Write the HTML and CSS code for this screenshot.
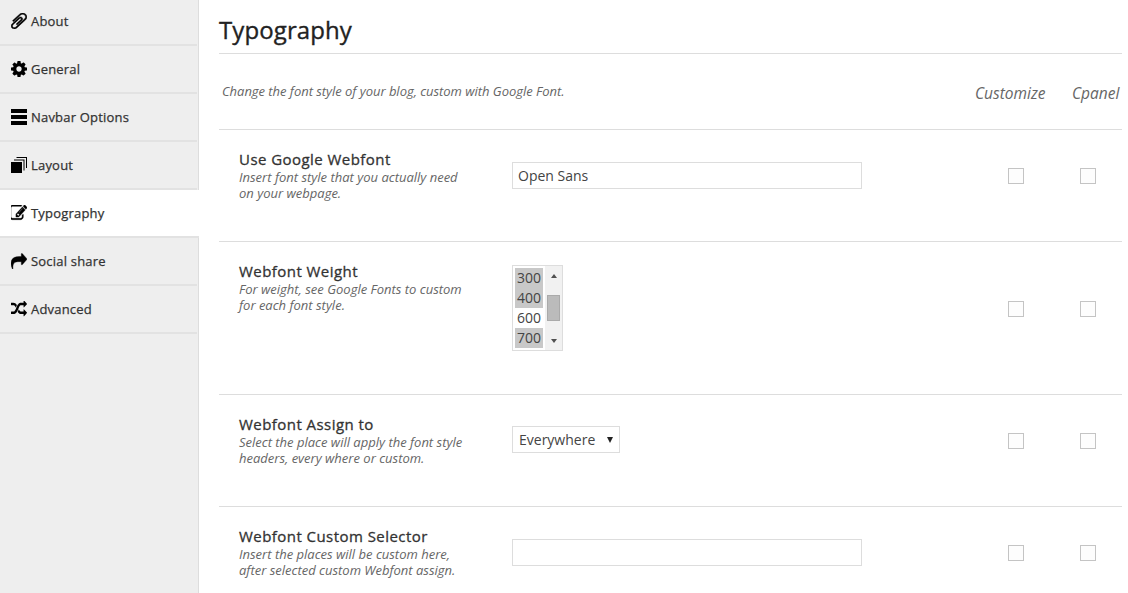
FILE: index.html
```html
<!DOCTYPE html>
<html lang="en">
<head>
<meta charset="utf-8">
<title>Typography</title>
<link rel="stylesheet" href="styles.css">
</head>
<body>
<div class="page">
<nav class="side">
  <a class="tab"><svg class="ico bold" viewBox="190 130 1410 1535" preserveAspectRatio="none"><path transform="matrix(-1 0 0 1 1792 0)" d="M1596 1385q0 117-79 196t-196 79q-135 0-235-100l-777-776q-113-115-113-271 0-159 110-270t269-111q158 0 273 113l605 606q10 10 10 22 0 16-30.500 46.500t-46.500 30.500q-13 0-23-10l-606-607q-79-77-181-77-106 0-179 75t-73 181q0 105 76 181l776 777q63 63 145 63 64 0 106-42t42-106q0-82-63-145l-581-581q-26-24-60-24-29 0-48 19t-19 48q0 32 25 59l410 410q10 10 10 22 0 16-31 47t-47 31q-12 0-22-10l-410-410q-63-61-63-149 0-82 57-139t139-57q88 0 149 63l581 581q100 98 100 235z"/></svg>About</a>
  <a class="tab"><svg class="ico" viewBox="128 128 1536 1536" preserveAspectRatio="none"><path d="M1152 896q0-106-75-181t-181-75-181 75-75 181 75 181 181 75 181-75 75-181zm512-109v222q0 12-8 23t-20 13l-185 28q-19 54-39 91 35 50 107 138 10 12 10 25t-9 23q-27 37-99 108t-94 71q-12 0-26-9l-138-108q-44 23-91 38-16 136-29 186-7 28-36 28h-222q-14 0-24.500-8.500t-11.500-21.500l-28-184q-49-16-90-37l-141 107q-10 9-25 9-14 0-25-11-126-114-165-168-7-10-7-23 0-12 8-23 15-21 51-66.500t54-70.500q-27-50-41-99l-183-27q-13-2-21-12.500t-8-23.500v-222q0-12 8-23t19-13l186-28q14-46 39-92-40-57-107-138-10-12-10-24 0-10 9-23 26-36 98.500-107.500t94.500-71.500q13 0 26 10l138 107q44-23 91-38 16-136 29-186 7-28 36-28h222q14 0 24.500 8.500t11.500 21.500l28 184q49 16 90 37l142-107q9-9 24-9 13 0 25 10 129 119 165 170 7 8 7 22 0 12-8 23-15 21-51 66.500t-54 70.500q26 50 41 98l183 28q13 2 21 12.500t8 23.500z"/></svg>General</a>
  <a class="tab"><svg class="ico" viewBox="0 0 16 16"><path d="M0 0h16v4H0zM0 6h16v4H0zM0 12h16v4H0z"/></svg>Navbar Options</a>
  <a class="tab"><svg class="ico" viewBox="0 0 16 16"><path d="M5.500 0H16V11H15V1H5.500zM3 2.500H13.500V13.500H12.500V3.500H3zM0 5H11V16H0z"/></svg>Layout</a>
  <a class="tab active"><svg class="ico bold" viewBox="128 130 1660 1534" preserveAspectRatio="none"><path d="M888 1184l116-116-152-152-116 116v56h96v96h56zm440-720q-16-16-33 1l-350 350q-17 17-1 33t33-1l350-350q17-17 1-33zm80 594v190q0 119-84.500 203.500t-203.500 84.500h-832q-119 0-203.500-84.500t-84.500-203.500v-832q0-119 84.500-203.500t203.500-84.500h832q63 0 117 25 15 7 18 23 3 17-9 29l-49 49q-14 14-32 8-23-6-45-6h-832q-66 0-113 47t-47 113v832q0 66 47 113t113 47h832q66 0 113-47t47-113v-126q0-13 9-22l64-64q15-15 35-7t20 29zm-96-738l288 288-672 672h-288v-288zm444 132l-92 92-288-288 92-92q28-28 68-28t68 28l152 152q28 28 28 68t-28 68z"/></svg>Typography</a>
  <a class="tab"><svg class="ico bold" viewBox="0 25 1792 1609" preserveAspectRatio="none"><path d="M1792 640q0 26-19 45l-512 512q-19 19-45 19t-45-19-19-45v-256h-224q-98 0-175.500 6t-154 21.500-133 42.500-105.500 69.500-80 101-48.500 138.500-17.500 181q0 55 5 123 0 6 2.500 23.500t2.500 26.500q0 15-8.500 25t-23.500 10q-16 0-28-17-7-9-13-22t-13.500-30-10.500-24q-127-285-127-451 0-199 53-333 162-403 875-403h224v-256q0-26 19-45t45-19 45 19l512 512q19 19 19 45z"/></svg>Social share</a>
  <a class="tab"><svg class="ico" viewBox="0 90 1792 1609" preserveAspectRatio="none"><path d="M666 481q-60 92-137 273-22-45-37-72.500t-40.500-63.500-51-56.500-63-35-81.500-14.500h-224q-14 0-23-9t-9-23v-192q0-14 9-23t23-9h224q250 0 410 225zm1126 799q0 14-9 23l-320 320q-9 9-23 9-13 0-22.500-9.500t-9.500-22.500v-192q-32 0-85 .5t-81 1-73-1-71-5-64-10.500-63-18.500-58-28.500-59-40-55-53.500-56-69q59-93 136-273 22 45 37 72.500t40.500 63.500 51 56.500 63 35 81.500 14.500h256v-192q0-14 9-23t23-9q12 0 24 10l319 319q9 9 9 23zm0-896q0 14-9 23l-320 320q-9 9-23 9-13 0-22.500-9.500t-9.500-22.500v-192h-256q-48 0-87 15t-69 45-51 61.500-45 77.500q-32 62-78 171-29 66-49.500 111t-54 105-64 100-74 83-90 68.500-106.500 42-128 16.500h-224q-14 0-23-9t-9-23v-192q0-14 9-23t23-9h224q48 0 87-15t69-45 51-61.500 45-77.500q32-62 78-171 29-66 49.500-111t54-105 64-100 74-83 90-68.500 106.500-42 128-16.500h256v-192q0-14 9-23t23-9q12 0 24 10l319 319q9 9 9 23z"/></svg>Advanced</a>
</nav>
<main class="main">
  <h1 class="title">Typography</h1>
  <div class="intro">
    <p class="lead">Change the font style of your blog, custom with Google Font.</p>
    <div class="heads"><span class="head-a">Customize</span><span class="head-b">Cpanel</span></div>
  </div>
  <section class="row r1">
    <div class="label"><h3>Use Google Webfont</h3><p>Insert font style that you actually need<br>on your webpage.</p></div>
    <div class="field"><input class="text" type="text" value="Open Sans"></div>
    <div class="checks"><input type="checkbox"><input type="checkbox"></div>
  </section>
  <section class="row r2">
    <div class="label"><h3>Webfont Weight</h3><p>For weight, see Google Fonts to custom<br>for each font style.</p></div>
    <div class="field">
      <div class="listbox">
        <ul class="opts"><li class="sel">300</li><li class="sel">400</li><li>600</li><li class="sel">700</li></ul>
        <div class="sbar"><i class="up"></i><b class="thumb"></b><i class="down"></i></div>
      </div>
    </div>
    <div class="checks c2"><input type="checkbox"><input type="checkbox"></div>
  </section>
  <section class="row r3">
    <div class="label"><h3>Webfont Assign to</h3><p>Select the place will apply the font style<br>headers, every where or custom.</p></div>
    <div class="field"><div class="drop"><span>Everywhere</span><i class="caret"></i></div></div>
    <div class="checks"><input type="checkbox"><input type="checkbox"></div>
  </section>
  <section class="row r4">
    <div class="label"><h3>Webfont Custom Selector</h3><p>Insert the places will be custom here,<br>after selected custom Webfont assign.</p></div>
    <div class="field"><input class="text" type="text"></div>
    <div class="checks"><input type="checkbox"><input type="checkbox"></div>
  </section>
</main>
</div>
</body>
</html>
```
FILE: styles.css
```css
* { box-sizing: border-box; }
html, body { margin: 0; height: 100%; overflow: hidden; background: #fff; }
body { font-family: "Open Sans", sans-serif; color: #333; }
.page { display: flex; height: 593px; overflow: hidden; }
.side { width: 199px; height: 595px; margin-top: -2px; flex: none; background: #eee; border-right: 1px solid #ddd; }
.tab { display: flex; align-items: center; height: 48px; padding: 0 0 1px 11px; margin-right: 1px; border-bottom: 2px solid #e2e2e2; font-size: 13px; font-weight: 400; letter-spacing: .2px; -webkit-text-stroke: .25px #333; color: #333; }
.tab.active { background: #fff; margin-right: -1px; position: relative; }
.ico { width: 16px; height: 16px; margin-right: 4px; flex: none; fill: #000; }
.bold { stroke: #000; stroke-width: 40px; }
.main { width: 903px; margin-left: 20px; flex: none; }
.title { margin: 0; height: 54px; padding-top: 13px; border-bottom: 1px solid #ddd; font-size: 24px; line-height: 33px; font-weight: 400; letter-spacing: .1px; -webkit-text-stroke: .35px #222; color: #222; }
.intro { display: flex; height: 76px; border-bottom: 1px solid #ddd; }
.lead { margin: 0; padding: 29px 0 0 3px; flex: 1; font-size: 13px; line-height: 17px; font-style: italic; letter-spacing: -.03px; color: #666; }
.heads { display: flex; padding-top: 28px; font-size: 15.500px; line-height: 22px; font-weight: 400; font-style: italic; color: #666; }
.head-a { width: 97px; }
.head-b { width: 50px; }
.row { display: flex; border-bottom: 1px solid #ddd; padding: 20px 0 0 20px; }
.r1 { height: 112px; }
.r2 { height: 153px; }
.r3 { height: 112px; }
.r4 { height: 87px; border-bottom: 0; }
.label { width: 273px; flex: none; }
.label h3 { margin: 0; font-size: 15px; line-height: 19px; font-weight: 400; color: #333; letter-spacing: .45px; -webkit-text-stroke: .3px #333; }
.label p { margin: 0; font-size: 13px; line-height: 16px; font-style: italic; color: #666; }
.field { width: 496px; flex: none; }
.r1 .field, .r4 .field { padding-top: 11px; }
.r3 .field { padding-top: 10px; }
.text { display: block; width: 350px; height: 27px; margin-top: 1px; padding: 0 5px; border: 1px solid #ddd; outline: 0; border-radius: 0; background: #fff; font: 14px "Open Sans", sans-serif; color: #444; }
.listbox { display: flex; width: 51px; height: 86px; margin-top: 3px; border: 1px solid #ddd; }
.opts { list-style: none; margin: 0; padding: 2px 2px 0 2px; width: 32px; }
.opts li { height: 20px; font-size: 14px; line-height: 20px; padding-left: 2px; color: #444; }
.opts li.sel { background: #c8c8c8; }
.sbar { flex: 1; display: flex; flex-direction: column; align-items: center; background: #f1f1f1; }
.up { width: 0; height: 0; margin-top: 8px; border: 3.500px solid transparent; border-top: 0; border-bottom: 4px solid #505050; }
.thumb { width: 13px; height: 26px; margin-top: 17px; background: #bbb; border: 1px solid #aaa; }
.down { width: 0; height: 0; margin-top: 18px; border: 3.500px solid transparent; border-bottom: 0; border-top: 4px solid #505050; }
.drop { display: flex; align-items: center; width: 108px; height: 27px; margin-top: 1px; padding: 0 6px; border: 1px solid #ddd; font-size: 14px; color: #444; background: #fff; }
.caret { width: 0; height: 0; margin-left: auto; border: 3.500px solid transparent; border-bottom: 0; border-top: 6px solid #222; }
.checks { display: flex; flex: none; }
.checks input { appearance: none; -webkit-appearance: none; width: 16px; height: 16px; margin: 18px 0 0 0; border: 1px solid #c4c4c4; background: #fdfdfd; border-radius: 0; }
.checks input:first-child { margin-right: 56px; }
.c2 input { margin-top: 39px; }
```
